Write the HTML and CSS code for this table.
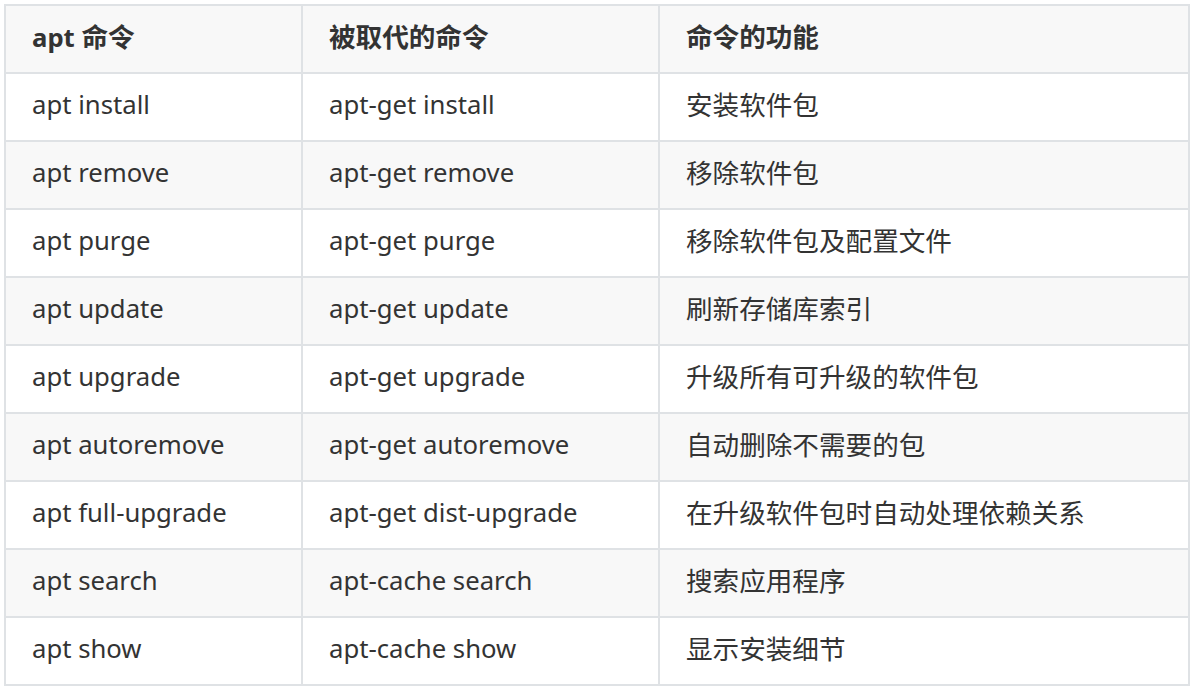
FILE: index.html
```html
<!DOCTYPE html>
<html lang="zh-CN">
<head>
<meta charset="utf-8">
<title>apt 命令</title>
<link rel="stylesheet" href="styles.css">
</head>
<body>
<table class="cmd-table">
  <colgroup>
    <col class="c1">
    <col class="c2">
    <col class="c3">
  </colgroup>
  <thead>
    <tr><th>apt <span class="zh">命令</span></th><th><span class="zh">被取代的命令</span></th><th><span class="zh">命令的功能</span></th></tr>
  </thead>
  <tbody>
    <tr><td>apt install</td><td>apt-get install</td><td><span class="zh">安装软件包</span></td></tr>
    <tr><td>apt remove</td><td>apt-get remove</td><td><span class="zh">移除软件包</span></td></tr>
    <tr><td>apt purge</td><td>apt-get purge</td><td><span class="zh">移除软件包及配置文件</span></td></tr>
    <tr><td>apt update</td><td>apt-get update</td><td><span class="zh">刷新存储库索引</span></td></tr>
    <tr><td>apt upgrade</td><td>apt-get upgrade</td><td><span class="zh">升级所有可升级的软件包</span></td></tr>
    <tr><td>apt autoremove</td><td>apt-get autoremove</td><td><span class="zh">自动删除不需要的包</span></td></tr>
    <tr><td>apt full-upgrade</td><td>apt-get dist-upgrade</td><td><span class="zh">在升级软件包时自动处理依赖关系</span></td></tr>
    <tr><td>apt search</td><td>apt-cache search</td><td><span class="zh">搜索应用程序</span></td></tr>
    <tr><td>apt show</td><td>apt-cache show</td><td><span class="zh">显示安装细节</span></td></tr>
  </tbody>
</table>
</body>
</html>
```
FILE: styles.css
```css
html, body {
  margin: 0;
  padding: 0;
  background: #ffffff;
}
body {
  padding: 4px;
  font-family: "Noto Sans", "Noto Sans CJK SC", sans-serif;
  font-size: 25.7px;
  color: #333333;
}
.zh {
  font-family: "Noto Sans CJK SC", sans-serif;
  font-size: 26.6px;
}
.cmd-table {
  border-collapse: collapse;
  width: 1184px;
  table-layout: fixed;
}
.c1 { width: 297px; }
.c2 { width: 357px; }
.c3 { width: 530px; }
.cmd-table th,
.cmd-table td {
  border: 2px solid #dfe2e5;
  padding: 0 26px 4px;
  height: 62px;
  text-align: left;
  vertical-align: middle;
  line-height: 40px;
  white-space: nowrap;
}
.cmd-table th {
  font-weight: 700;
  background: #f8f8f8;
}
.cmd-table tbody tr:nth-child(even) td {
  background: #f8f8f8;
}
```
